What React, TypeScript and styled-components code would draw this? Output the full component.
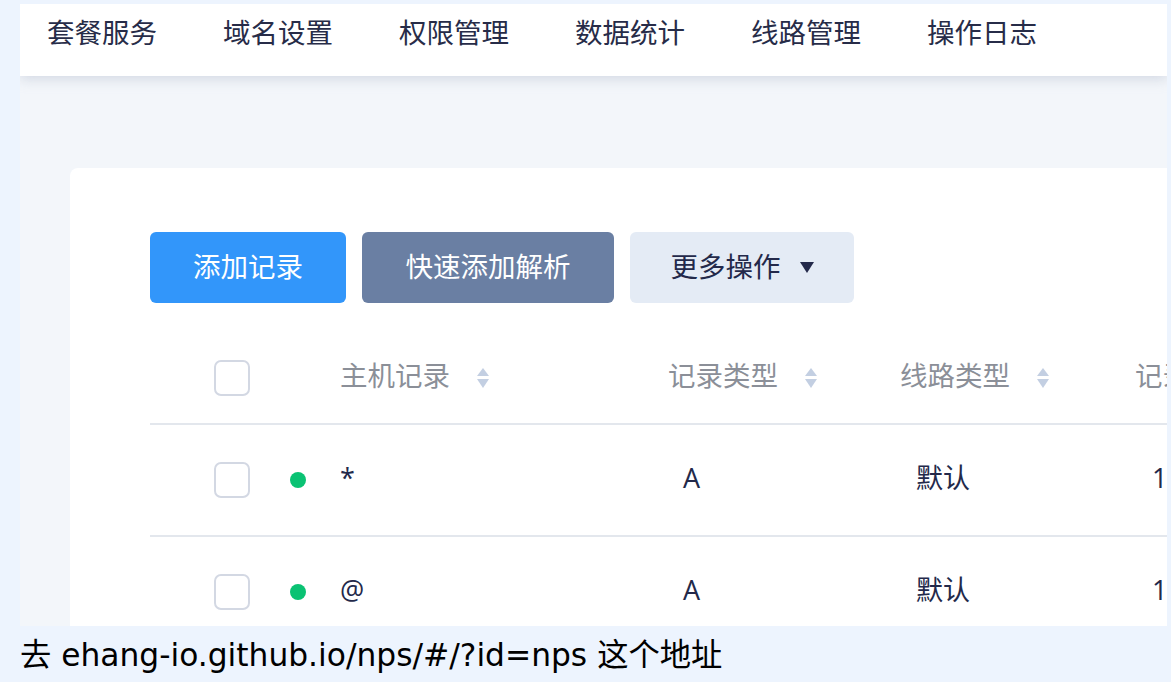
import styled, { createGlobalStyle } from 'styled-components'

const GlobalStyle = createGlobalStyle`
  html, body {
    margin: 0;
    padding: 0;
    background: #edf4fe;
  }
  body {
    font-family: "Open Sans", "Noto Sans CJK SC", sans-serif;
    width: 1171px;
    height: 682px;
    overflow: hidden;
  }
`

const Page = styled.div`
  padding: 4px 4px 0 20px;
`

const Shot = styled.div`
  width: 1147px;
  height: 622px;
  overflow: hidden;
  background: #f3f6fa;
  display: flex;
  flex-direction: column;
`

const Nav = styled.nav`
  height: 72px;
  flex-shrink: 0;
  background: #fff;
  display: flex;
  align-items: center;
  gap: 66px;
  padding: 0 0 16px 27px;
  box-sizing: border-box;
  box-shadow: 0 3px 12px rgba(170, 180, 200, 0.45);
  position: relative;
  z-index: 1;
`

const NavItem = styled.span`
  font-family: "Noto Sans CJK SC", sans-serif;
  font-size: 27.5px;
  line-height: 1;
  color: #272c48;
  white-space: nowrap;
`

const Content = styled.main`
  flex: 1;
  padding: 92px 0 0 50px;
  display: flex;
`

const Card = styled.section`
  flex: 1;
  background: #fff;
  border-radius: 8px 0 0 0;
  padding: 64px 0 0 80px;
  min-width: 0;
`

const Toolbar = styled.div`
  display: flex;
  gap: 16px;
`

const Button = styled.button<{ $variant: 'primary' | 'secondary' | 'light'; $width: number }>`
  width: ${(p) => p.$width}px;
  height: 71px;
  border: 0;
  border-radius: 6px;
  font-family: "Noto Sans CJK SC", sans-serif;
  font-size: 27.5px;
  line-height: 1;
  display: flex;
  align-items: center;
  justify-content: center;
  gap: 19px;
  padding: 0 0 4px;
  cursor: pointer;
  background: ${(p) =>
    p.$variant === 'primary' ? '#3296fa' : p.$variant === 'secondary' ? '#6a7fa3' : '#e4ebf5'};
  color: ${(p) => (p.$variant === 'light' ? '#23294a' : '#fff')};
`

const Caret = styled.span`
  width: 0;
  height: 0;
  margin-top: 4px;
  border-left: 7px solid transparent;
  border-right: 7px solid transparent;
  border-top: 11px solid #23294a;
`

const Table = styled.div`
  margin-top: 30px;
`

const Row = styled.div<{ $head?: boolean }>`
  display: grid;
  grid-template-columns: 76px 50px 328px 232px 235px 1fr;
  align-items: center;
  padding-left: 64px;
  height: ${(p) => (p.$head ? '92px' : '112px')};
  box-sizing: border-box;
  border-bottom: 2px solid #e3e7ed;
  white-space: nowrap;
`

const Check = styled.span`
  display: block;
  width: 36px;
  height: 36px;
  box-sizing: border-box;
  border: 2px solid #d3d8e3;
  border-radius: 7px;
  background: #fff;
`

const Dot = styled.span`
  display: block;
  width: 16px;
  height: 16px;
  border-radius: 50%;
  background: #0ac273;
`

const HeadCell = styled.div`
  display: flex;
  align-items: center;
  font-family: "Noto Sans CJK SC", sans-serif;
  font-size: 27.5px;
  line-height: 1;
  color: #8b8f98;
  padding-bottom: 6px;
`

const Cell = styled.div<{ $indent?: number }>`
  font-size: 27px;
  line-height: 1;
  color: #23294a;
  padding: 0 0 6px ${(p) => p.$indent ?? 0}px;
`

const Sort = styled.svg`
  margin: 6px 0 0 27px;
  flex-shrink: 0;
`

const Caption = styled.p`
  margin: 0;
  height: 56px;
  line-height: 58px;
  font-family: "DejaVu Sans", "Noto Sans CJK SC", sans-serif;
  font-size: 31.3px;
  color: #000;
  white-space: nowrap;
`

function SortIcon() {
  return (
    <Sort width="12" height="20" viewBox="0 0 12 20">
      <path d="M6 0 L12 8 L0 8 Z" fill="#c3cfe2" />
      <path d="M0 11 L12 11 L6 20 Z" fill="#c3cfe2" />
    </Sort>
  )
}

const navItems = ['套餐服务', '域名设置', '权限管理', '数据统计', '线路管理', '操作日志']

const records = [
  { host: '*', type: 'A', line: '默认', ttl: '1' },
  { host: '@', type: 'A', line: '默认', ttl: '1' },
]

export default function App() {
  return (
    <>
      <GlobalStyle />
      <Page>
        <Shot>
          <Nav>
            {navItems.map((item) => (
              <NavItem key={item}>{item}</NavItem>
            ))}
          </Nav>
          <Content>
            <Card>
              <Toolbar>
                <Button $variant="primary" $width={196}>添加记录</Button>
                <Button $variant="secondary" $width={252}>快速添加解析</Button>
                <Button $variant="light" $width={224}>
                  更多操作
                  <Caret />
                </Button>
              </Toolbar>
              <Table>
                <Row $head>
                  <Check />
                  <span />
                  <HeadCell>
                    主机记录
                    <SortIcon />
                  </HeadCell>
                  <HeadCell>
                    记录类型
                    <SortIcon />
                  </HeadCell>
                  <HeadCell>
                    线路类型
                    <SortIcon />
                  </HeadCell>
                  <HeadCell>记录值</HeadCell>
                </Row>
                {records.map((r) => (
                  <Row key={r.host}>
                    <Check />
                    <Dot />
                    <Cell>{r.host}</Cell>
                    <Cell $indent={15}>{r.type}</Cell>
                    <Cell $indent={16}>{r.line}</Cell>
                    <Cell $indent={17}>{r.ttl}</Cell>
                  </Row>
                ))}
              </Table>
            </Card>
          </Content>
        </Shot>
        <Caption>去 ehang-io.github.io/nps/#/?id=nps 这个地址</Caption>
      </Page>
    </>
  )
}
